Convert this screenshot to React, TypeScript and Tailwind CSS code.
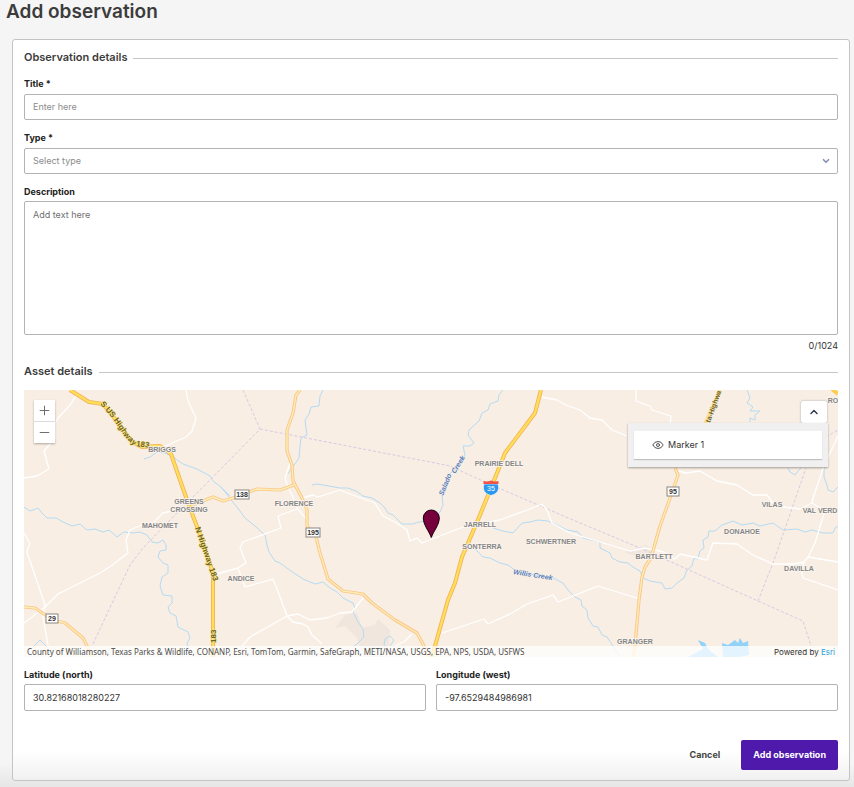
import { useState } from 'react';
import { ChevronDown, ChevronUp, Eye, Minus, Plus } from 'lucide-react';

/**
 * Add observation
 */

// Map geometry, drawn in the map's own coordinates
const creeks = [
  'M144 459 L150 457 157 452 165 453 173 457 183 464 197 469 210 476 214 482 220 486 230 496',
  'M220 486 L226 493 232 501 240 511 245 518 255 526 265 535 267 545 269 552 275 561 280 563 291 571 303 579 315 584 323 582 330 588 337 592 343 598 353 603 355 608 353 612 358 622 363 629 364 637 357 644 353 647',
  'M323 390 L320 396 319 406 311 407 309 414 305 420 306 428 307 435 301 438 300 447 299 458 294 465 288 474',
  'M312 485 L317 484 323 485 340 488 348 488 356 491 363 496 372 498 380 503 385 508 388 513 393 515 402 524 412 524 423 521 436 517 440 512 443 505 442 495 448 475 457 468 465 455 463 446 470 446 474 443 468 435 469 430 479 421 482 413 488 410 490 404 498 401 499 395 503 390',
  'M747 390 L750 398 747 403 753 407 750 411 760 411 755 415 755 420 750 418 750 422',
  'M788 468 L790 472 795 475 798 471 801 468',
  'M824 466 L824 477 827 485 828 490 833 492 838 487',
  'M838 526 L835 528 833 533 823 533 812 530 805 532 797 529 783 530 773 523 760 526 753 523 742 525 733 521 722 525 715 531 709 531 708 537 703 540 704 548 700 551 698 559 694 558 692 566 687 570 684 578 677 583 672 588 665 589 662 583 650 581 643 578 640 571 633 567 628 563 620 562 612 558 610 553 600 548 600 542 583 538 578 532 567 530 557 525 548 521 538 520 530 522 522 523 513 533 503 531 493 528',
  'M475 549 L483 557 490 558 500 563 508 565 517 572 535 575 553 578 563 583 568 590 575 597 581 600 582 606 587 610 588 618 593 626 598 627 602 635 607 637 613 646 620 657',
  'M24 507 L30 511 38 508 42 513 47 518 56 518 63 522 72 526 80 524 87 530 95 529 103 532 109 530 117 537 124 532 133 533 140 532 147 535 152 542 158 543 163 540 166 545 166 550 160 551 158 557 163 563 168 565 168 573 162 577 160 586 163 595 172 596 172 603 168 607 170 613 176 616 178 627 188 632 190 638 187 643 190 657',
  'M34 646 L40 640 46 646',
  'M384 646 L385 639 390 636 394 640 390 646',
];

const lanes = [
  'M76 396 L70 405 58 418 55 423 55 438 44 451 49 469 37 476 24 478',
  'M186 390 L188 401 196 418 192 431 186 437 163 447',
  'M542 397 L557 400 566 405 580 410 590 418 602 420 612 430 627 436',
  'M290 463 L285 478 288 487 292 495 297 508 308 521',
  'M302 498 L313 495 318 497 340 490 350 494 375 503 383 516 395 522 407 530 410 541 417 538 422 543 463 527 500 520 530 509 542 504 547 510 552 523 570 533 630 551 645 548 664 552 675 559 680 554 707 560 713 543 737 544 753 555 773 564 793 564 804 562 808 557 838 562',
  'M822 520 L815 543 808 557 M804 562 L801 570 803 578 838 590',
  'M636 390 L636 401 650 406 652 410 671 416 670 425',
  'M675 470 L686 473 700 471 717 481 737 485 753 495 767 495 775 506 800 509 812 503 825 511 820 526',
  'M812 503 L813 498 824 466 838 436',
  'M442 633 L484 619 488 624 512 613 527 604 553 595 558 602 598 586 640 599',
  'M24 533 L30 543 27 552 45 605 43 617 48 645',
  'M24 623 L45 607 58 594 70 588 100 573 111 566 128 553 126 540 130 530 142 525 153 523 163 513 189 507',
  'M213 575 L238 568 246 563 240 547 243 542 281 528 278 516 297 509',
  'M238 568 L245 587 273 579 277 589 287 616 293 622 303 624 308 627 312 635 322 644',
  'M242 646 L250 637 287 616 298 614 310 620 327 618 340 613 352 612 363 598',
  'M395 646 L405 641 412 634',
];

const borders = [
  'M243 390 L260 429 210 480 170 520 143 548 130 565 92 646',
  'M260 429 L430 462 450 466 487 483 573 520 640 548 758 601 803 621 811 646',
  'M758 601 L773 563 788 520 806 468',
  'M826 437 L838 430',
];

const highways = [
  'M190 506 L203 501 213 497 223 501 233 498 257 489 280 490 294 485',
  'M300 390 L296 395 293 413 287 430 287 451 292 465 293 481 302 498 307 510 307 526 316 537 320 553 328 579 343 591 363 594 372 603 395 620 417 633 424 646 430 657',
  'M675 468 L678 475 673 490 660 526 651 558 645 567 642 577 639 600 635 646 633 657',
  'M24 607 L35 608 53 620 65 623 83 638 87 646 93 657',
];

const freeways = [
  'M70 390 L89 402 103 404 112 415 123 430 132 442 142 447 160 446 171 454 187 500 202 540 213 573 213 657',
  'M541 390 L535 413 505 453 495 478 480 515 462 557 455 583 448 600 435 646 432 657',
];

const places = [
  { name: 'BRIGGS', x: 162, y: 452 },
  { name: 'GREENS', x: 189, y: 504 },
  { name: 'CROSSING', x: 189, y: 512 },
  { name: 'MAHOMET', x: 160, y: 528 },
  { name: 'FLORENCE', x: 294, y: 506 },
  { name: 'ANDICE', x: 241, y: 581 },
  { name: 'PRAIRIE DELL', x: 499, y: 466 },
  { name: 'JARRELL', x: 480, y: 527 },
  { name: 'SONTERRA', x: 482, y: 549 },
  { name: 'SCHWERTNER', x: 551, y: 544 },
  { name: 'BARTLETT', x: 654, y: 559 },
  { name: 'DONAHOE', x: 742, y: 534 },
  { name: 'VILAS', x: 772, y: 507 },
  { name: 'VAL VERD', x: 820, y: 513 },
  { name: 'DAVILLA', x: 799, y: 571 },
  { name: 'GRANGER', x: 635, y: 644 },
  { name: 'RO', x: 833, y: 403 },
];

const shields = [
  { route: '138', x: 242, y: 495 },
  { route: '195', x: 313, y: 533 },
  { route: '95', x: 673, y: 492 },
  { route: '29', x: 52, y: 619 },
];

function AssetMap() {
  return (
    <svg
      viewBox="24 390 814 267"
      preserveAspectRatio="xMidYMid slice"
      className="h-full w-full"
      role="img"
      aria-label="Asset location map"
    >
      <rect x="24" y="390" width="814" height="267" fill="#f8eee4" />
      <path d="M335 628 L345 615 357 613 362 628 375 625 378 619 390 630 388 657 363 657 357 638 345 626Z" fill="#f0e6dd" />
      <path d="M624 552 L646 545 652 549 650 558 632 555Z" fill="#f0e6dd" />
      <path d="M688 657 L703 649 698 640 705 643 708 649 718 657Z M723 657 L722 643 728 645 731 643 735 640 738 643 740 638 743 643 748 641 749 655 740 657Z" fill="#92d1fa" />
      <g fill="none" strokeLinejoin="round">
        {creeks.map((d) => <path key={d} d={d} stroke="#b4dbf3" strokeWidth="1" />)}
        {borders.map((d) => <path key={d} d={d} stroke="#d9c8e3" strokeWidth="1" strokeDasharray="3 2" />)}
        {lanes.map((d) => <path key={d} d={d} stroke="#ffffff" strokeWidth="1.3" />)}
        {highways.map((d) => <path key={d} d={d} stroke="#fbc588" strokeWidth="3.2" />)}
        {highways.map((d) => <path key={d} d={d} stroke="#fdeeb5" strokeWidth="1.4" />)}
        {freeways.map((d) => <path key={d} d={d} stroke="#f5ad55" strokeWidth="4" />)}
        {freeways.map((d) => <path key={d} d={d} stroke="#fddf59" strokeWidth="2.4" />)}
        <path d="M720 390 L705 423" stroke="#fbdf8f" strokeWidth="3" />
        <path d="M832 389 L838 394" stroke="#fbcf4f" strokeWidth="4" />
      </g>

      <path id="us-183" d="M100 404 L112 418 125 437 134 446 151 448" fill="none" />
      <g
        className="font-['Liberation_Sans',sans-serif] text-[8px] font-bold"
        fill="#6b6121"
        stroke="#fbe88d"
        strokeWidth="1"
        paintOrder="stroke"
      >
        <text><textPath href="#us-183">S US Highway 183</textPath></text>
        <text transform="translate(195 528) rotate(71)">N Highway 183</text>
        <text transform="translate(216 643) rotate(-90)">183</text>
      </g>
      <text
        transform="translate(710 423) rotate(-70)"
        className="font-['Liberation_Sans',sans-serif] text-[7px] font-bold"
        fill="#6b6121"
      >
        ta-Highwa
      </text>
      <g
        className="font-['Liberation_Sans',sans-serif] text-[7px] font-bold italic"
        fill="#5480bd"
        stroke="#f8eee4"
        strokeWidth="1"
        paintOrder="stroke"
      >
        <text transform="translate(443 496) rotate(-68)">Salado</text>
        <text transform="translate(455 474) rotate(-58)">Creek</text>
        <text transform="translate(513 574) rotate(9)">Willis Creek</text>
      </g>
      <g
        className="font-['Liberation_Sans',sans-serif] text-[7px] font-bold"
        fill="#858585"
        stroke="#fbf5ef"
        strokeWidth="1.5"
        paintOrder="stroke"
        textAnchor="middle"
      >
        {places.map((place) => (
          <text key={place.name} x={place.x} y={place.y}>{place.name}</text>
        ))}
      </g>
      {shields.map(({ route, x, y }) => {
        const half = route.length > 2 ? 7 : 6;
        return (
          <g key={route}>
            <rect x={x - half} y={y - 5} width={half * 2} height="9" fill="#fff" stroke="#8a8580" />
            <text
              x={x}
              y={y + 2}
              textAnchor="middle"
              fill="#333"
              className="font-['Liberation_Sans',sans-serif] text-[7px] font-bold"
            >
              {route}
            </text>
          </g>
        );
      })}

      <path d="M484 484 C482 490 485 494 491 495.500 C497 494 500 490 498 484Z" fill="#2b98ed" stroke="#fff" strokeWidth="0.6" />
      <path d="M483.500 481 Q487 482 491 480.500 Q495 482 498.500 481 V484 H483.500Z" fill="#f0534a" />
      <text x="491" y="491" textAnchor="middle" fill="#fff" className="font-['Liberation_Sans',sans-serif] text-[7px]">35</text>

      <path
        d="M431.300 537.500 C429 531 423.300 525 423.300 518 A8 8 0 0 1 439.300 518 C439.300 525 433.500 531 431.300 537.500Z"
        fill="#75003b"
        stroke="#16000b"
        strokeWidth="1"
      />
    </svg>
  );
}

function SectionTitle({ children }: { children: string }) {
  return (
    <div className="flex h-4 items-center gap-1.5">
      <h2 className="text-[11px] font-semibold text-[#3c3c3c]">{children}</h2>
      <div className="mt-0.5 h-px flex-1 bg-[#c6c6c6]" />
    </div>
  );
}

const labelClass = 'block text-[9px] leading-3 font-bold text-[#222]';
const fieldClass =
  'block w-full rounded-[2px] border border-[#b3b3b3] bg-white px-2 text-[9px] outline-none placeholder:text-[#8c8c8c]';

export default function App() {
  const [type, setType] = useState('');
  const [description, setDescription] = useState('');
  const [showLayers, setShowLayers] = useState(true);
  const [lat, setLat] = useState('30.82168018280227');
  const [lng, setLng] = useState('-97.6529484986981');

  return (
    <main className="min-h-screen bg-[#f5f5f5] bg-linear-to-b from-[#f5f5f5] from-97% to-[#e6e6e6] pb-1.5 font-['Inter',sans-serif]">
      <h1 className="px-1.5 text-[19px] leading-6 font-semibold text-[#3c3c3c]">Add observation</h1>

      <form
        className="mt-[15px] mr-1 ml-3 rounded-[3px] border border-[#c4c4c4] bg-linear-to-b from-white from-96% to-[#f1f1f1] px-[11px] pt-[9px] pb-2.5"
        onSubmit={(e) => e.preventDefault()}
      >
        <SectionTitle>Observation details</SectionTitle>

        <label htmlFor="title" className={`mt-[13px] ${labelClass}`}>Title *</label>
        <input id="title" placeholder="Enter here" className={`mt-1 h-[26px] pb-0.5 text-[#333] ${fieldClass}`} />

        <label htmlFor="type" className={`mt-3 ${labelClass}`}>Type *</label>
        <div className="relative mt-1">
          <select
            id="type"
            value={type}
            onChange={(e) => setType(e.target.value)}
            className={`h-[26px] appearance-none text-[#8c8c8c] ${fieldClass}`}
          >
            <option value="">Select type</option>
          </select>
          <ChevronDown className="pointer-events-none absolute top-2 right-[7px] size-2.5 text-[#8791b5]" strokeWidth={4} />
        </div>

        <label htmlFor="description" className={`mt-3 ${labelClass}`}>Description</label>
        <textarea
          id="description"
          placeholder="Add text here"
          maxLength={1024}
          value={description}
          onChange={(e) => setDescription(e.target.value)}
          className={`mt-[3px] h-[134px] resize-none py-1.5 text-[#333] ${fieldClass} placeholder:text-[#707070]`}
        />
        <p className="mt-[5px] text-right text-[9px] leading-3 text-[#333]">{description.length}/1024</p>

        <div className="mt-[11px]">
          <SectionTitle>Asset details</SectionTitle>
        </div>

        <div className="relative mt-[11px] h-[267px] overflow-hidden">
          <AssetMap />

          <div className="absolute top-2.5 left-2.5 flex flex-col gap-px bg-[#dcdcdc] text-[#6e6e6e] shadow-[0_1px_2px_rgba(0,0,0,0.3)]">
            <button type="button" aria-label="Zoom in" className="grid size-[21px] place-items-center bg-white">
              <Plus className="size-[15px]" strokeWidth={1.6} />
            </button>
            <button type="button" aria-label="Zoom out" className="grid size-[21px] place-items-center bg-white">
              <Minus className="size-[15px]" strokeWidth={1.6} />
            </button>
          </div>

          <div className="absolute top-[11px] right-2.5 flex flex-col items-end">
            <button
              type="button"
              aria-label="Toggle markers"
              onClick={() => setShowLayers(!showLayers)}
              className="mr-px grid h-[22px] w-[26px] place-items-center rounded-[2px] bg-white text-[#333b4f] shadow-[0_0_2px_rgba(60,70,110,0.5)]"
            >
              <ChevronUp className="size-3" strokeWidth={3} />
            </button>
            {showLayers && (
              <div className="w-[200px] bg-[#f0f0f0] px-1.5 py-2 shadow-[0_1px_2px_rgba(0,0,0,0.35)]">
                <div className="flex h-7 items-center gap-1 bg-white pl-[18px] text-[9px] text-[#333] shadow-[0_1px_1px_rgba(0,0,0,0.2)]">
                  <Eye className="size-3 text-[#555]" strokeWidth={2} />
                  Marker 1
                </div>
              </div>
            )}
          </div>

          <div className="absolute inset-x-0 bottom-0 flex h-[11px] items-center justify-between bg-white/75 px-[3px] text-[8px] text-[#4c4c4c]">
            <span className="font-['Noto_Sans',sans-serif]">County of Williamson, Texas Parks &amp; Wildlife, CONANP, Esri, TomTom, Garmin, SafeGraph, METI/NASA, USGS, EPA, NPS, USDA, USFWS</span>
            <span className="text-[#323232]">
              Powered by <a href="#esri" className="text-[#2a9fdc]">Esri</a>
            </span>
          </div>
        </div>

        <div className="mt-3 grid grid-cols-2 gap-2.5">
          <div>
            <label htmlFor="lat" className={labelClass}>Latitude (north)</label>
            <input id="lat" value={lat} onChange={(e) => setLat(e.target.value)} className={`mt-[3px] h-[27px] text-[#333] ${fieldClass}`} />
          </div>
          <div>
            <label htmlFor="lng" className={labelClass}>Longitude (west)</label>
            <input id="lng" value={lng} onChange={(e) => setLng(e.target.value)} className={`mt-[3px] h-[27px] text-[#333] ${fieldClass}`} />
          </div>
        </div>

        <div className="mt-[29px] flex justify-end gap-[9px] text-[9px] font-bold">
          <button type="button" className="h-[30px] px-3 text-[#444]">Cancel</button>
          <button type="submit" className="h-[30px] rounded-[2px] bg-[#4f1aab] px-3 text-white">Add observation</button>
        </div>
      </form>
    </main>
  );
}
